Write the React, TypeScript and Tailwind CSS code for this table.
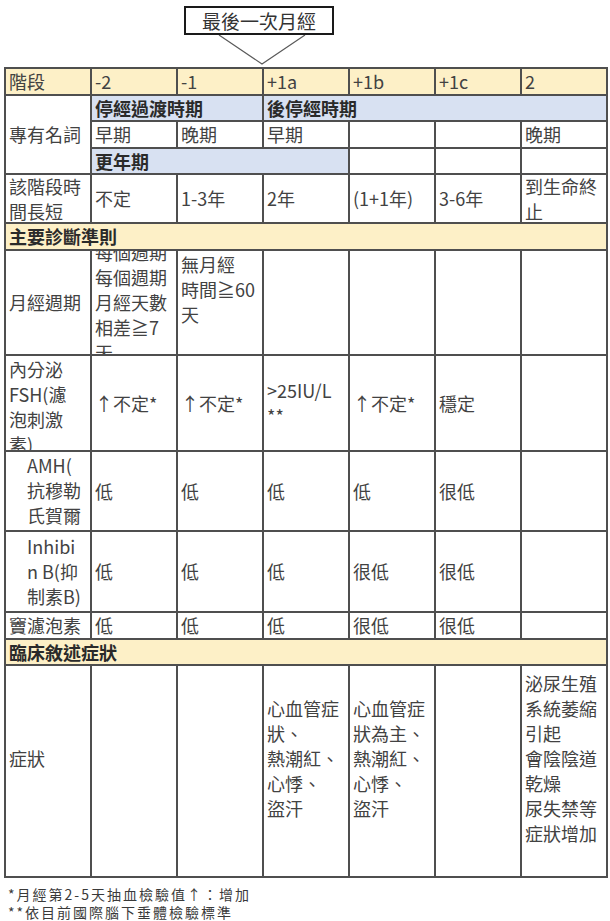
import React from 'react'

type Cell = {
	lines: string[]
	span?: 2 | 3 | 4 | 7
	rows?: 3
	bg?: 'yellow' | 'blue'
	bold?: boolean
	top?: boolean
	indent?: boolean
	lift?: boolean
	clip?: boolean
}

const classNames = (...classes: (string | false | undefined)[]) => classes.filter(Boolean).join(' ')

const spanClass = { 2: 'col-span-2', 3: 'col-span-3', 4: 'col-span-4', 7: 'col-span-7' }

const t = (s: string, extra: Partial<Cell> = {}): Cell => ({ lines: s ? [s] : [], ...extra })
const m = (lines: string[], extra: Partial<Cell> = {}): Cell => ({ lines, ...extra })
const y = { bg: 'yellow' as const }
const section = { span: 7 as const, bg: 'yellow' as const, bold: true }
const lift = { lift: true }

const cells: Cell[] = [
	// 階段
	t('階段', y),
	t('-2', y),
	t('-1', y),
	t('+1a', y),
	t('+1b', y),
	t('+1c', y),
	t('2', y),
	// 專有名詞
	t('專有名詞', { rows: 3 }),
	t('停經過渡時期', { span: 2, bg: 'blue', bold: true }),
	t('後停經時期', { span: 4, bg: 'blue', bold: true }),
	t('早期'),
	t('晚期'),
	t('早期'),
	t(''),
	t(''),
	t('晚期'),
	t('更年期', { span: 3, bg: 'blue', bold: true }),
	t(''),
	t(''),
	t(''),
	// 該階段時間長短
	m(['該階段時', '間長短']),
	t('不定'),
	t('1-3年'),
	t('2年'),
	t('(1+1年)'),
	t('3-6年'),
	m(['到生命終', '止']),
	t('主要診斷準則', section),
	// 月經週期
	t('月經週期'),
	m(['每個週期', '每個週期', '月經天數', '相差≧7', '天'], { clip: true }),
	m(['無月經', '時間≧60', '天'], { top: true }),
	t(''),
	t(''),
	t(''),
	t(''),
	// FSH
	m(['內分泌', 'FSH(濾', '泡刺激', '素)'], { top: true, clip: true }),
	t('↑不定*'),
	t('↑不定*'),
	m(['>25IU/L', '**']),
	t('↑不定*'),
	t('穩定'),
	t(''),
	// AMH
	m(['AMH(', '抗穆勒', '氏賀爾', '蒙)'], { top: true, indent: true, clip: true }),
	t('低'),
	t('低'),
	t('低'),
	t('低'),
	t('很低'),
	t(''),
	// Inhibin B
	m(['Inhibi', 'n B(抑', '制素B)'], { indent: true }),
	t('低'),
	t('低'),
	t('低'),
	t('很低'),
	t('很低'),
	t(''),
	// 竇濾泡素
	t('竇濾泡素'),
	t('低'),
	t('低'),
	t('低'),
	t('很低'),
	t('很低'),
	t(''),
	t('臨床敘述症狀', section),
	// 症狀
	t('症狀', lift),
	t('', lift),
	t('', lift),
	m(['心血管症', '狀、', '熱潮紅、', '心悸、', '盜汗'], lift),
	m(['心血管症', '狀為主、', '熱潮紅、', '心悸、', '盜汗'], lift),
	t('', lift),
	m(['泌尿生殖', '系統萎縮', '引起', '會陰陰道', '乾燥', '尿失禁等', '症狀增加'], lift),
]

const TableCell = ({ cell }: { cell: Cell }) => (
	<div
		className={classNames(
			'flex flex-col border-r-2 border-b-2 border-[#4f4f4f] px-[3px] whitespace-nowrap',
			cell.clip && 'overflow-hidden',
			cell.span && spanClass[cell.span],
			cell.rows && 'row-span-3',
			cell.bg == 'yellow' && 'bg-[#fdf0c7]',
			cell.bg == 'blue' && 'bg-[#d8e1f2]',
			cell.bold ? 'font-bold text-[#2a2a2a]' : 'text-[#424242]',
			cell.top ? 'justify-start pt-[1px]' : 'justify-center',
			cell.indent && 'pl-[21px]',
			cell.lift && 'pb-[25px]'
		)}
	>
		{cell.lines.map((line, i) => (
			<span key={i} className="block">
				{line}
			</span>
		))}
	</div>
)

export default function App() {
	return (
		<div className="w-[610px] min-h-[921px] bg-white font-['Noto_Sans_CJK_TC','Noto_Sans',sans-serif] text-[18px] leading-[25px]">
			{/* callout above the table */}
			<div className="h-[67px] pt-[6px]">
				<div className="ml-[184px] flex h-[29px] w-[150px] items-center justify-center border-2 border-[#1a1a1a] text-[19px] leading-none text-[#333]">
					最後一次月經
				</div>
				<svg className="ml-[217px] block" width="90" height="32" viewBox="0 0 90 32">
					<polyline points="2,0 45,29 88,0" fill="none" stroke="#5a5a5a" strokeWidth="1.2" />
				</svg>
			</div>

			<div className="ml-[4px] grid w-[604px] grid-cols-[repeat(7,86px)] grid-rows-[27px_26px_27px_26px_49px_27px_105px_96px_80px_81px_27px_26px_212px] border-t-2 border-l-2 border-[#4f4f4f]">
				{cells.map((cell, i) => (
					<TableCell key={i} cell={cell} />
				))}
			</div>

			<div className="mt-[7px] pl-[8px] text-[14px] leading-[18px] tracking-[2px] text-[#3a3a3a]">
				<p>*月經第2-5天抽血檢驗值↑：增加</p>
				<p>**依目前國際腦下垂體檢驗標準</p>
			</div>
		</div>
	)
}
